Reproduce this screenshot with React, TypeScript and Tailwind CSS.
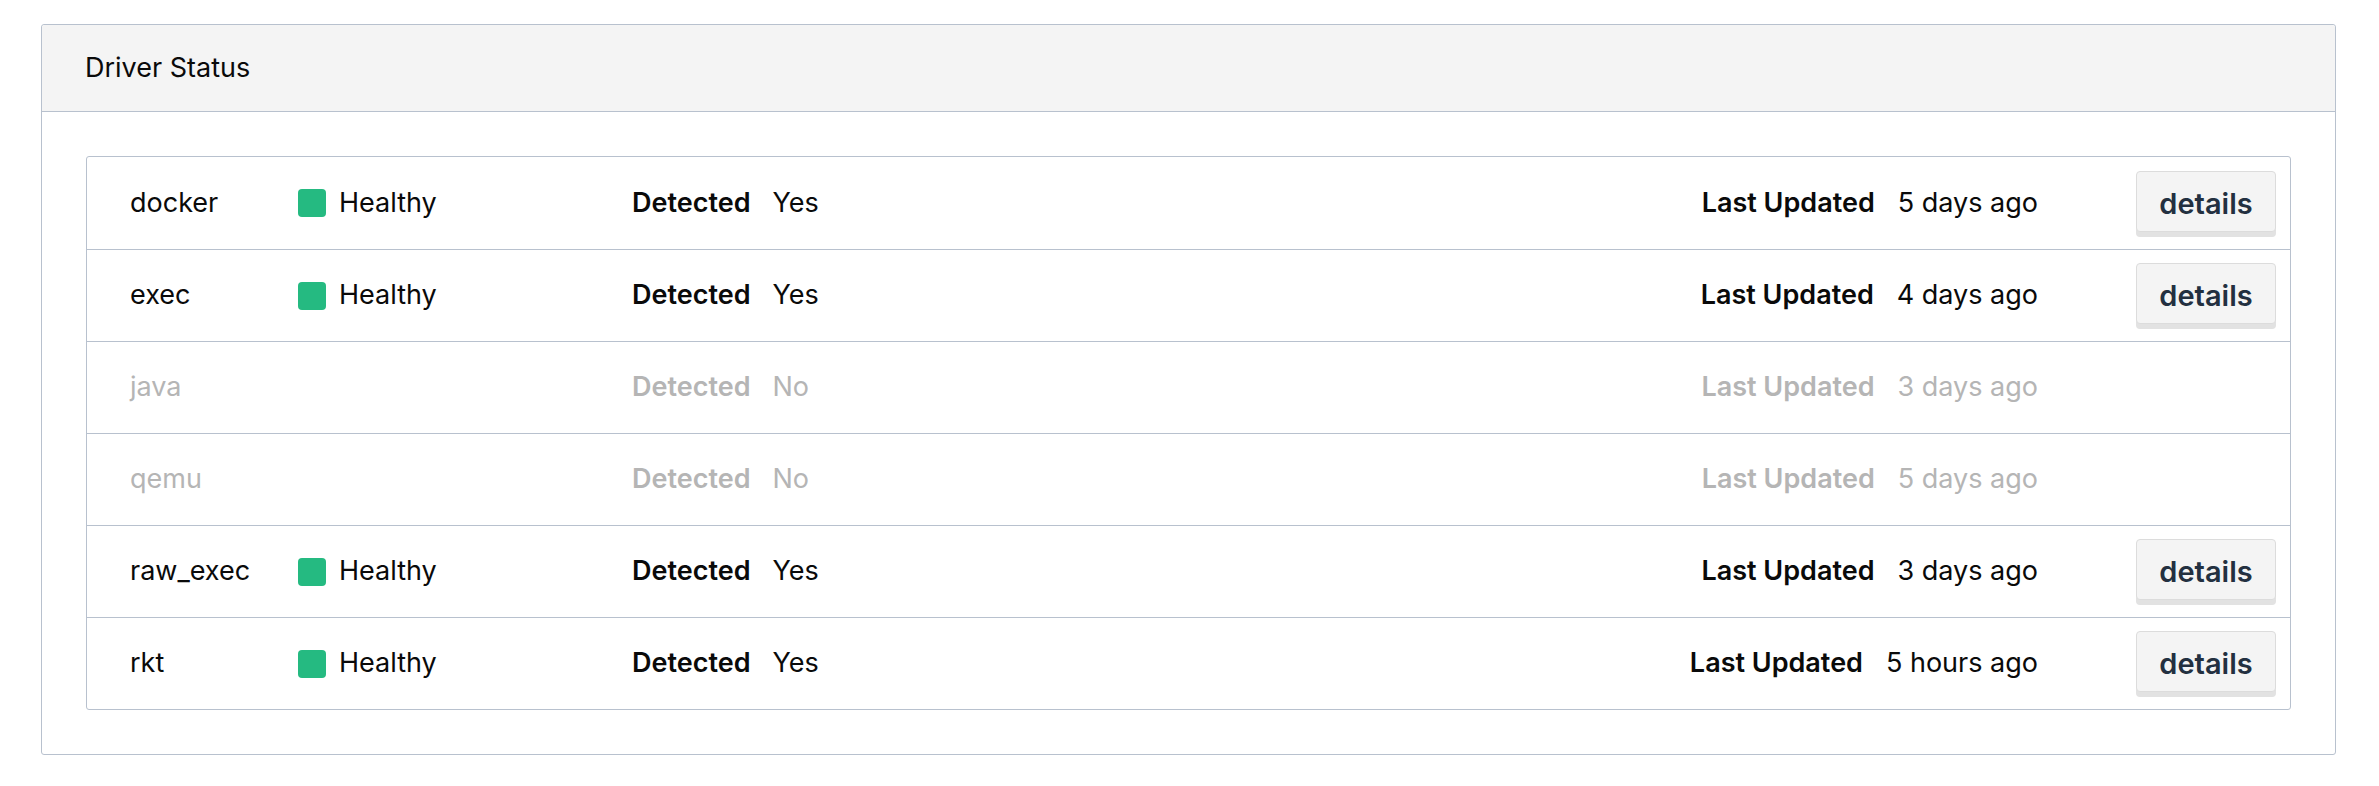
import React from 'react';

const DRIVERS = [
  { name: 'docker', healthy: true, detected: true, updated: '5 days ago' },
  { name: 'exec', healthy: true, detected: true, updated: '4 days ago' },
  { name: 'java', healthy: false, detected: false, updated: '3 days ago' },
  { name: 'qemu', healthy: false, detected: false, updated: '5 days ago' },
  { name: 'raw_exec', healthy: true, detected: true, updated: '3 days ago' },
  { name: 'rkt', healthy: true, detected: true, updated: '5 hours ago' },
];

export default function App() {
  return (
    <div
      className="min-h-screen bg-white pl-[41px] pr-[43px] pt-[24px] text-[27px] text-[#0a0a0a]"
      style={{ fontFamily: 'Inter, "Noto Sans", sans-serif' }}
    >
      <div className="border border-[#b8c1ce] rounded-[3px]">
        {/* header */}
        <div className="h-[87px] bg-[#f4f4f4] border-b border-[#b8c1ce] flex items-center px-[43px] rounded-t-[3px]">
          <h2 className="text-[27px] font-normal">Driver Status</h2>
        </div>

        <div className="p-[44px]">
          <div className="border border-[#b8c1ce] rounded-[3px]">
            {DRIVERS.map((d, i) => {
              const dim = !d.detected;
              return (
                <div
                  key={d.name}
                  className={`h-[92px] flex items-center pl-[43px] pr-[14px] ${i > 0 ? 'border-t border-[#b8c1ce]' : ''} ${dim ? 'text-[#b5b5b5]' : ''}`}
                >
                  <div className="w-[168px] shrink-0">{d.name}</div>
                  <div className="w-[334px] shrink-0 flex items-center gap-[13px]">
                    {d.healthy && (
                      <>
                        <span className="w-[28px] h-[28px] rounded-[4px] bg-[#25ba81] inline-block" />
                        <span>Healthy</span>
                      </>
                    )}
                  </div>
                  <div className="flex-1 flex items-center gap-[22px]">
                    <span className="font-semibold">Detected</span>
                    <span>{d.detected ? 'Yes' : 'No'}</span>
                  </div>
                  <div className="flex items-center gap-[23px]">
                    <span className="font-semibold">Last Updated</span>
                    <span>{d.updated}</span>
                  </div>
                  <div className="w-[238px] shrink-0 flex justify-end">
                    {d.healthy && (
                      <button className="w-[140px] h-[61px] bg-[#f4f4f4] border border-[#dcdcdc] rounded-[4px] shadow-[0_5px_0_#e2e2e2] text-[29px] font-semibold text-[#233040] leading-none pt-[4px] mb-[4px]">
                        details
                      </button>
                    )}
                  </div>
                </div>
              );
            })}
          </div>
        </div>
      </div>
    </div>
  );
}
